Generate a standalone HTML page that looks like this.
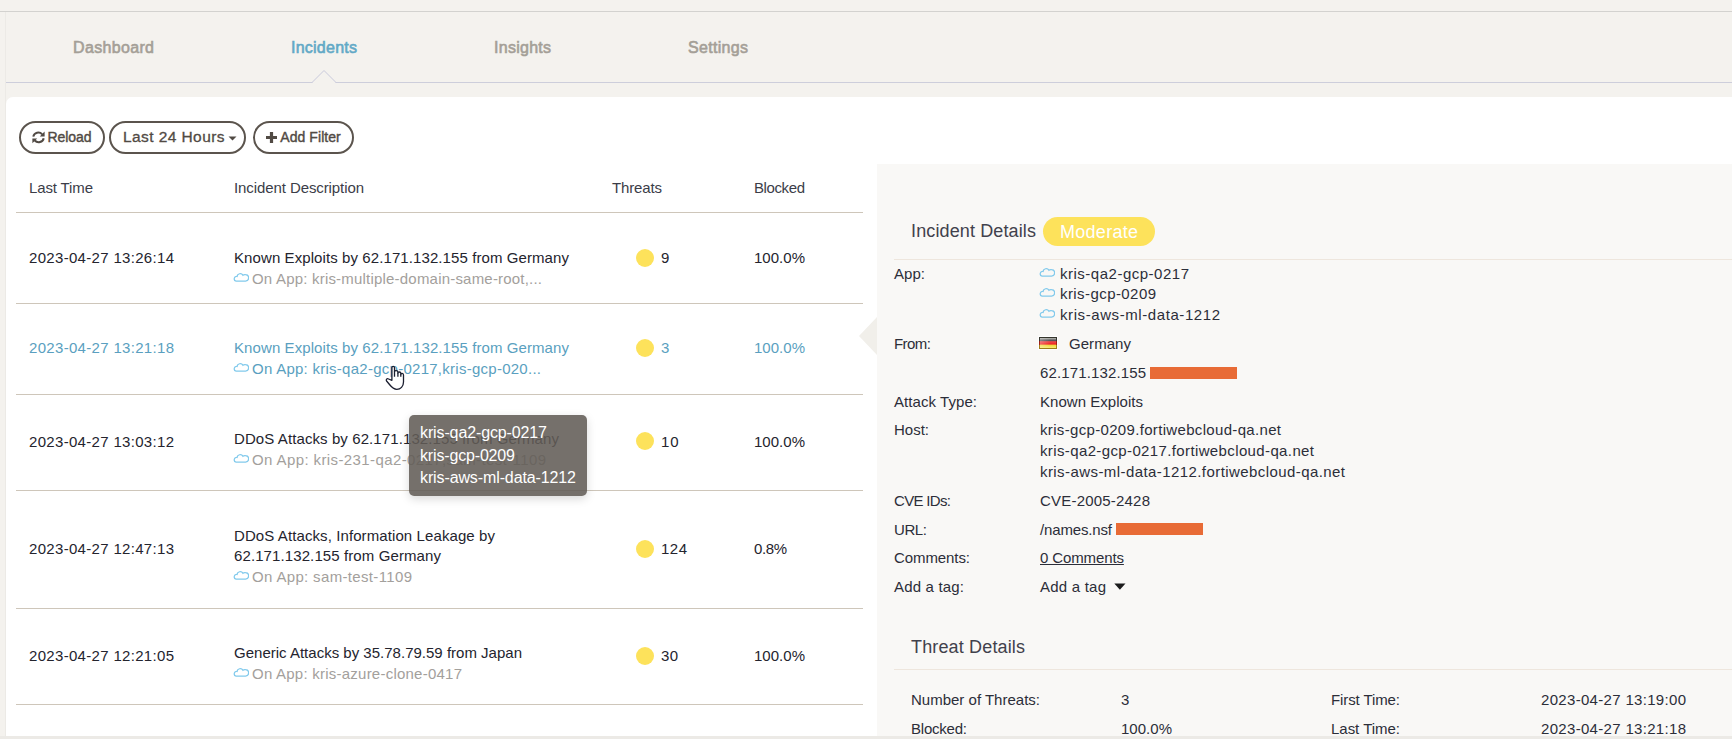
<!DOCTYPE html>
<html>
<head>
<meta charset="utf-8">
<title>Incidents</title>
<style>
html,body{margin:0;padding:0;}
body{width:1732px;height:739px;overflow:hidden;background:#f4f2ee;position:relative;font-family:"Liberation Sans",sans-serif;}
.a{position:absolute;}
.t{position:absolute;white-space:pre;line-height:20px;height:20px;font-family:"Liberation Sans",sans-serif;}
.hl{position:absolute;height:1px;left:16px;width:847px;background:#cec6ba;}
.dot{position:absolute;width:18px;height:18px;border-radius:50%;background:#fde25b;left:636px;}
.btn{position:absolute;top:121px;height:29px;border:2px solid #5b544d;border-radius:17px;background:#fff;}
.cloud{position:absolute;width:16px;height:9px;}
.bar{position:absolute;height:11.5px;width:87px;background:#e86b36;}
</style>
</head>
<body>
<!-- chrome -->
<div class="a" style="left:0;top:11px;width:1732px;height:1px;background:#d3d2cf;"></div>
<div class="a" style="left:5px;top:12px;width:1px;height:727px;background:#eceae6;"></div>
<div class="a" style="left:6px;top:82px;width:1726px;height:1px;background:#cdcedb;"></div>
<svg class="a" style="left:310px;top:69px;" width="28" height="15" viewBox="0 0 28 15"><path d="M2 13.5 L14 1.5 L26 13.5" fill="#f4f2ee" stroke="#c9cadc" stroke-width="1"/><rect x="3" y="13" width="22" height="2" fill="#f4f2ee"/></svg>

<!-- main white panel -->
<div class="a" style="left:6px;top:97px;width:1726px;height:639px;background:#fff;border-top-left-radius:7px;"></div>
<div class="a" style="left:0;top:736px;width:1732px;height:3px;background:#eceae6;"></div>

<!-- buttons -->
<div class="btn" style="left:19px;width:82px;"></div>
<div class="btn" style="left:109px;width:133px;"></div>
<div class="btn" style="left:253px;width:97px;"></div>
<svg class="a" style="left:32px;top:131px;" width="13" height="13" viewBox="0 0 13 13"><path d="M1.3 5.6 A5.1 4.9 0 0 1 10.2 3.3" fill="none" stroke="#514a44" stroke-width="2"/><path d="M11.7 7.2 A5.1 4.9 0 0 1 2.8 9.5" fill="none" stroke="#514a44" stroke-width="2"/><path d="M12.6 0.6 V5.4 H7.8 Z" fill="#514a44"/><path d="M0.4 12.2 V7.4 H5.2 Z" fill="#514a44"/></svg>
<svg class="a" style="left:228px;top:136px;" width="9" height="5" viewBox="0 0 9 5"><path d="M0.5 0.5 L8.5 0.5 L4.5 4.5 Z" fill="#514a44"/></svg>
<svg class="a" style="left:266px;top:131.7px;" width="11" height="11" viewBox="0 0 11 11"><path d="M3.9 0 H7.1 V3.9 H11 V7.1 H7.1 V11 H3.9 V7.1 H0 V3.9 H3.9 Z" fill="#514a44"/></svg>

<!-- table lines -->
<div class="hl" style="top:212px;"></div>
<div class="hl" style="top:303px;"></div>
<div class="hl" style="top:394px;"></div>
<div class="hl" style="top:490px;"></div>
<div class="hl" style="top:608px;"></div>
<div class="hl" style="top:704px;"></div>

<!-- dots -->
<div class="dot" style="top:249px;"></div>
<div class="dot" style="top:339px;"></div>
<div class="dot" style="top:432px;"></div>
<div class="dot" style="top:540px;"></div>
<div class="dot" style="top:647px;"></div>

<!-- cloud icons (rows) -->
<svg class="cloud" style="left:232.6px;top:272.8px;" viewBox="0 0 16 9"><path d="M3.1 8.1 H12.3 A3.2 3.2 0 0 0 12.6 1.7 Q11 1.4 9.9 2.3 A3.1 3.1 0 0 0 4.1 3.5 A2.3 2.3 0 0 0 3.1 8.1 Z" fill="none" stroke="#82caec" stroke-width="1.25"/></svg>
<svg class="cloud" style="left:232.6px;top:362.8px;" viewBox="0 0 16 9"><path d="M3.1 8.1 H12.3 A3.2 3.2 0 0 0 12.6 1.7 Q11 1.4 9.9 2.3 A3.1 3.1 0 0 0 4.1 3.5 A2.3 2.3 0 0 0 3.1 8.1 Z" fill="none" stroke="#82caec" stroke-width="1.25"/></svg>
<svg class="cloud" style="left:232.6px;top:453.8px;" viewBox="0 0 16 9"><path d="M3.1 8.1 H12.3 A3.2 3.2 0 0 0 12.6 1.7 Q11 1.4 9.9 2.3 A3.1 3.1 0 0 0 4.1 3.5 A2.3 2.3 0 0 0 3.1 8.1 Z" fill="none" stroke="#82caec" stroke-width="1.25"/></svg>
<svg class="cloud" style="left:232.6px;top:570.8px;" viewBox="0 0 16 9"><path d="M3.1 8.1 H12.3 A3.2 3.2 0 0 0 12.6 1.7 Q11 1.4 9.9 2.3 A3.1 3.1 0 0 0 4.1 3.5 A2.3 2.3 0 0 0 3.1 8.1 Z" fill="none" stroke="#82caec" stroke-width="1.25"/></svg>
<svg class="cloud" style="left:232.6px;top:667.8px;" viewBox="0 0 16 9"><path d="M3.1 8.1 H12.3 A3.2 3.2 0 0 0 12.6 1.7 Q11 1.4 9.9 2.3 A3.1 3.1 0 0 0 4.1 3.5 A2.3 2.3 0 0 0 3.1 8.1 Z" fill="none" stroke="#82caec" stroke-width="1.25"/></svg>

<!-- right detail panel -->
<div class="a" style="left:877px;top:164px;width:855px;height:572px;background:#f9f8f6;"></div>
<svg class="a" style="left:859px;top:317px;" width="18" height="38" viewBox="0 0 18 38"><path d="M18 0 L0 19 L18 38 Z" fill="#f1efea"/></svg>
<div class="a" style="left:1043px;top:217px;width:112px;height:29px;border-radius:14.5px;background:#fde25b;"></div>
<div class="a" style="left:894px;top:259px;width:838px;height:1px;background:#eee6dd;"></div>
<div class="a" style="left:894px;top:669px;width:838px;height:1px;background:#eee6dd;"></div>

<svg class="cloud" style="left:1038.8px;top:268.4px;" viewBox="0 0 16 9"><path d="M3.1 8.1 H12.3 A3.2 3.2 0 0 0 12.6 1.7 Q11 1.4 9.9 2.3 A3.1 3.1 0 0 0 4.1 3.5 A2.3 2.3 0 0 0 3.1 8.1 Z" fill="none" stroke="#82caec" stroke-width="1.25"/></svg>
<svg class="cloud" style="left:1038.8px;top:288.4px;" viewBox="0 0 16 9"><path d="M3.1 8.1 H12.3 A3.2 3.2 0 0 0 12.6 1.7 Q11 1.4 9.9 2.3 A3.1 3.1 0 0 0 4.1 3.5 A2.3 2.3 0 0 0 3.1 8.1 Z" fill="none" stroke="#82caec" stroke-width="1.25"/></svg>
<svg class="cloud" style="left:1038.8px;top:309.4px;" viewBox="0 0 16 9"><path d="M3.1 8.1 H12.3 A3.2 3.2 0 0 0 12.6 1.7 Q11 1.4 9.9 2.3 A3.1 3.1 0 0 0 4.1 3.5 A2.3 2.3 0 0 0 3.1 8.1 Z" fill="none" stroke="#82caec" stroke-width="1.25"/></svg>

<!-- flag -->
<div class="a" style="left:1038px;top:336px;width:20px;height:14px;background:#fff;border-radius:1px;"></div>
<div class="a" style="left:1039px;top:337px;width:18px;height:12px;background:linear-gradient(#34342b 0,#3a3a33 30%,#9c2014 36%,#a32116 62%,#a8861c 68%,#9a7a18 100%);"></div>
<div class="a" style="left:1040px;top:338px;width:16px;height:10px;background:linear-gradient(90deg,rgba(255,255,255,.28),rgba(255,255,255,0) 65%),linear-gradient(#bdbdb4 0,#6a6a6c 18%,#4a4a4e 30%,#f24a4a 36%,#ee2222 62%,#f0d63a 70%,#f8ee70 100%);"></div>

<div class="bar" style="left:1150px;top:367px;"></div>
<div class="bar" style="left:1116px;top:523px;"></div>
<svg class="a" style="left:1114px;top:583px;" width="12" height="8" viewBox="0 0 12 8"><path d="M0.3 0.6 L11.5 0.6 L5.9 6.8 Z" fill="#1c1c1c"/></svg>

<div class="t" style="left:73px;top:38px;font-size:16px;color:#a49f97;letter-spacing:0.340px;-webkit-text-stroke:0.6px #a49f97;">Dashboard</div>
<div class="t" style="left:291px;top:38px;font-size:16px;color:#62a9c6;letter-spacing:0.244px;-webkit-text-stroke:0.6px #62a9c6;">Incidents</div>
<div class="t" style="left:494px;top:38px;font-size:16px;color:#a49f97;letter-spacing:0.266px;-webkit-text-stroke:0.6px #a49f97;">Insights</div>
<div class="t" style="left:688px;top:38px;font-size:16px;color:#a49f97;letter-spacing:0.312px;-webkit-text-stroke:0.6px #a49f97;">Settings</div>
<div class="t" style="left:47.5px;top:127.4px;font-size:14px;color:#514a44;letter-spacing:-0.075px;-webkit-text-stroke:0.4px #514a44;">Reload</div>
<div class="t" style="left:123px;top:127.2px;font-size:15.5px;color:#514a44;letter-spacing:0.417px;-webkit-text-stroke:0.3px #514a44;">Last 24 Hours</div>
<div class="t" style="left:280.3px;top:127.4px;font-size:14px;color:#514a44;letter-spacing:0.064px;-webkit-text-stroke:0.4px #514a44;">Add Filter</div>
<div class="t" style="left:29px;top:177.6px;font-size:15px;color:#3b3d48;letter-spacing:-0.129px;">Last Time</div>
<div class="t" style="left:234px;top:177.6px;font-size:15px;color:#3b3d48;letter-spacing:-0.091px;">Incident Description</div>
<div class="t" style="left:612px;top:177.6px;font-size:15px;color:#3b3d48;letter-spacing:-0.143px;">Threats</div>
<div class="t" style="left:754px;top:177.6px;font-size:15px;color:#3b3d48;letter-spacing:-0.396px;">Blocked</div>
<div class="t" style="left:29px;top:247.6px;font-size:15px;color:#24242e;letter-spacing:0.317px;">2023-04-27 13:26:14</div>
<div class="t" style="left:234px;top:247.6px;font-size:15px;color:#24242e;letter-spacing:0.090px;">Known Exploits by 62.171.132.155 from Germany</div>
<div class="t" style="left:252px;top:268.6px;font-size:15px;color:#a3a09c;letter-spacing:0.201px;">On App: kris-multiple-domain-same-root,...</div>
<div class="t" style="left:661px;top:247.6px;font-size:15px;color:#24242e;letter-spacing:0.356px;">9</div>
<div class="t" style="left:754px;top:247.6px;font-size:15px;color:#24242e;letter-spacing:0.025px;">100.0%</div>
<div class="t" style="left:29px;top:337.6px;font-size:15px;color:#5a9fc0;letter-spacing:0.317px;">2023-04-27 13:21:18</div>
<div class="t" style="left:234px;top:337.6px;font-size:15px;color:#5a9fc0;letter-spacing:0.090px;">Known Exploits by 62.171.132.155 from Germany</div>
<div class="t" style="left:252px;top:358.6px;font-size:15px;color:#5a9fc0;letter-spacing:0.263px;">On App: kris-qa2-gcp-0217,kris-gcp-020...</div>
<div class="t" style="left:661px;top:337.6px;font-size:15px;color:#5a9fc0;letter-spacing:-0.344px;">3</div>
<div class="t" style="left:754px;top:337.6px;font-size:15px;color:#5a9fc0;letter-spacing:0.025px;">100.0%</div>
<div class="t" style="left:29px;top:431.6px;font-size:15px;color:#24242e;letter-spacing:0.317px;">2023-04-27 13:03:12</div>
<div class="t" style="left:234px;top:428.6px;font-size:15px;color:#24242e;letter-spacing:0.095px;">DDoS Attacks by 62.171.132.155 from Germany</div>
<div class="t" style="left:252px;top:449.6px;font-size:15px;color:#a3a09c;letter-spacing:0.394px;">On App: kris-231-qa2-0217,sam-test-1109</div>
<div class="t" style="left:661px;top:431.6px;font-size:15px;color:#24242e;letter-spacing:0.812px;">10</div>
<div class="t" style="left:754px;top:431.6px;font-size:15px;color:#24242e;letter-spacing:0.025px;">100.0%</div>
<div class="t" style="left:29px;top:538.6px;font-size:15px;color:#24242e;letter-spacing:0.317px;">2023-04-27 12:47:13</div>
<div class="t" style="left:234px;top:525.6px;font-size:15px;color:#24242e;letter-spacing:0.096px;">DDoS Attacks, Information Leakage by</div>
<div class="t" style="left:234px;top:545.6px;font-size:15px;color:#24242e;letter-spacing:0.104px;">62.171.132.155 from Germany</div>
<div class="t" style="left:252px;top:566.6px;font-size:15px;color:#a3a09c;letter-spacing:0.343px;">On App: sam-test-1109</div>
<div class="t" style="left:661px;top:538.6px;font-size:15px;color:#24242e;letter-spacing:0.484px;">124</div>
<div class="t" style="left:754px;top:538.6px;font-size:15px;color:#24242e;letter-spacing:-0.401px;">0.8%</div>
<div class="t" style="left:29px;top:645.6px;font-size:15px;color:#24242e;letter-spacing:0.317px;">2023-04-27 12:21:05</div>
<div class="t" style="left:234px;top:642.6px;font-size:15px;color:#24242e;letter-spacing:0.008px;">Generic Attacks by 35.78.79.59 from Japan</div>
<div class="t" style="left:252px;top:663.6px;font-size:15px;color:#a3a09c;letter-spacing:0.234px;">On App: kris-azure-clone-0417</div>
<div class="t" style="left:661px;top:645.6px;font-size:15px;color:#24242e;letter-spacing:0.312px;">30</div>
<div class="t" style="left:754px;top:645.6px;font-size:15px;color:#24242e;letter-spacing:0.025px;">100.0%</div>
<div class="t" style="left:911px;top:221px;font-size:18px;color:#41414c;letter-spacing:0.128px;">Incident Details</div>
<div class="t" style="left:1060px;top:221.5px;font-size:18px;color:#ffffff;letter-spacing:0.279px;">Moderate</div>
<div class="t" style="left:894px;top:263.6px;font-size:15px;color:#2c2e39;letter-spacing:0.047px;">App:</div>
<div class="t" style="left:894px;top:333.6px;font-size:15px;color:#2c2e39;letter-spacing:-0.543px;">From:</div>
<div class="t" style="left:894px;top:391.6px;font-size:15px;color:#2c2e39;letter-spacing:0.067px;">Attack Type:</div>
<div class="t" style="left:894px;top:419.6px;font-size:15px;color:#2c2e39;letter-spacing:-0.004px;">Host:</div>
<div class="t" style="left:894px;top:490.6px;font-size:15px;color:#2c2e39;letter-spacing:-0.670px;">CVE IDs:</div>
<div class="t" style="left:894px;top:519.6px;font-size:15px;color:#2c2e39;letter-spacing:-0.396px;">URL:</div>
<div class="t" style="left:894px;top:547.6px;font-size:15px;color:#2c2e39;letter-spacing:-0.086px;">Comments:</div>
<div class="t" style="left:894px;top:576.6px;font-size:15px;color:#2c2e39;letter-spacing:0.179px;">Add a tag:</div>
<div class="t" style="left:1060px;top:263.6px;font-size:15px;color:#2c2e39;letter-spacing:0.506px;">kris-qa2-gcp-0217</div>
<div class="t" style="left:1060px;top:283.6px;font-size:15px;color:#2c2e39;letter-spacing:0.427px;">kris-gcp-0209</div>
<div class="t" style="left:1060px;top:304.6px;font-size:15px;color:#2c2e39;letter-spacing:0.581px;">kris-aws-ml-data-1212</div>
<div class="t" style="left:1069px;top:333.6px;font-size:15px;color:#2c2e39;letter-spacing:0.052px;">Germany</div>
<div class="t" style="left:1040px;top:362.6px;font-size:15px;color:#2c2e39;letter-spacing:0.132px;">62.171.132.155</div>
<div class="t" style="left:1040px;top:391.6px;font-size:15px;color:#2c2e39;letter-spacing:0.034px;">Known Exploits</div>
<div class="t" style="left:1040px;top:419.6px;font-size:15px;color:#2c2e39;letter-spacing:0.330px;">kris-gcp-0209.fortiwebcloud-qa.net</div>
<div class="t" style="left:1040px;top:440.6px;font-size:15px;color:#2c2e39;letter-spacing:0.374px;">kris-qa2-gcp-0217.fortiwebcloud-qa.net</div>
<div class="t" style="left:1040px;top:461.6px;font-size:15px;color:#2c2e39;letter-spacing:0.424px;">kris-aws-ml-data-1212.fortiwebcloud-qa.net</div>
<div class="t" style="left:1040px;top:490.6px;font-size:15px;color:#2c2e39;letter-spacing:0.202px;">CVE-2005-2428</div>
<div class="t" style="left:1040px;top:519.6px;font-size:15px;color:#2c2e39;letter-spacing:-0.153px;">/names.nsf</div>
<div class="t" style="left:1040px;top:547.6px;font-size:15px;color:#2c2e39;letter-spacing:-0.115px;text-decoration:underline;">0 Comments</div>
<div class="t" style="left:1040px;top:576.6px;font-size:15px;color:#2c2e39;letter-spacing:0.223px;">Add a tag</div>
<div class="t" style="left:911px;top:637px;font-size:18px;color:#41414c;letter-spacing:0.150px;">Threat Details</div>
<div class="t" style="left:911px;top:689.6px;font-size:15px;color:#2c2e39;letter-spacing:0.003px;">Number of Threats:</div>
<div class="t" style="left:1121px;top:689.6px;font-size:15px;color:#2c2e39;letter-spacing:-0.344px;">3</div>
<div class="t" style="left:1331px;top:689.6px;font-size:15px;color:#2c2e39;letter-spacing:-0.100px;">First Time:</div>
<div class="t" style="left:1541px;top:689.6px;font-size:15px;color:#2c2e39;letter-spacing:0.317px;">2023-04-27 13:19:00</div>
<div class="t" style="left:911px;top:718.6px;font-size:15px;color:#2c2e39;letter-spacing:-0.221px;">Blocked:</div>
<div class="t" style="left:1121px;top:718.6px;font-size:15px;color:#2c2e39;letter-spacing:0.025px;">100.0%</div>
<div class="t" style="left:1331px;top:718.6px;font-size:15px;color:#2c2e39;letter-spacing:-0.023px;">Last Time:</div>
<div class="t" style="left:1541px;top:718.6px;font-size:15px;color:#2c2e39;letter-spacing:0.317px;">2023-04-27 13:21:18</div>
<div class="t" style="left:420px;top:422.5px;font-size:16px;color:#ffffff;letter-spacing:-0.122px;z-index:20;">kris-qa2-gcp-0217</div>
<div class="t" style="left:420px;top:446px;font-size:16px;color:#ffffff;letter-spacing:-0.161px;z-index:20;">kris-gcp-0209</div>
<div class="t" style="left:420px;top:467.5px;font-size:16px;color:#ffffff;letter-spacing:-0.113px;z-index:20;">kris-aws-ml-data-1212</div>

<!-- tooltip -->
<div class="a" style="left:409px;top:415px;width:178px;height:81px;border-radius:5px;background:rgba(98,92,87,.88);box-shadow:0 3px 10px rgba(0,0,0,.15);z-index:10;"></div>

<!-- cursor -->
<svg class="a" style="left:370px;top:355px;z-index:30;" width="50" height="40" viewBox="0 0 50 40"><path d="M21.9 25.3 L21.9 12.6 C21.9 10.9 24.5 10.9 24.5 12.6 L24.5 16.6 C24.5 15.2 27.9 15.2 27.9 17 L27.9 18 C27.9 16.6 30.8 16.6 30.8 18.4 L30.8 19.4 C30.8 18 33.5 18 33.5 20 L33.5 27 C33.5 31.5 30.5 34.4 26.8 34.4 C23.5 34.4 21.5 32 19.5 29.5 L16.6 26 C15.6 24.6 17 23 18.6 24 Z" fill="#fff" stroke="#1b1e2f" stroke-width="1.3" stroke-linejoin="round"/><path d="M24.5 16.4 V21.8 M27.9 17.8 V21.8 M30.8 19.2 V21.8" stroke="#1b1e2f" stroke-width="1.3" fill="none"/></svg>
</body>
</html>
